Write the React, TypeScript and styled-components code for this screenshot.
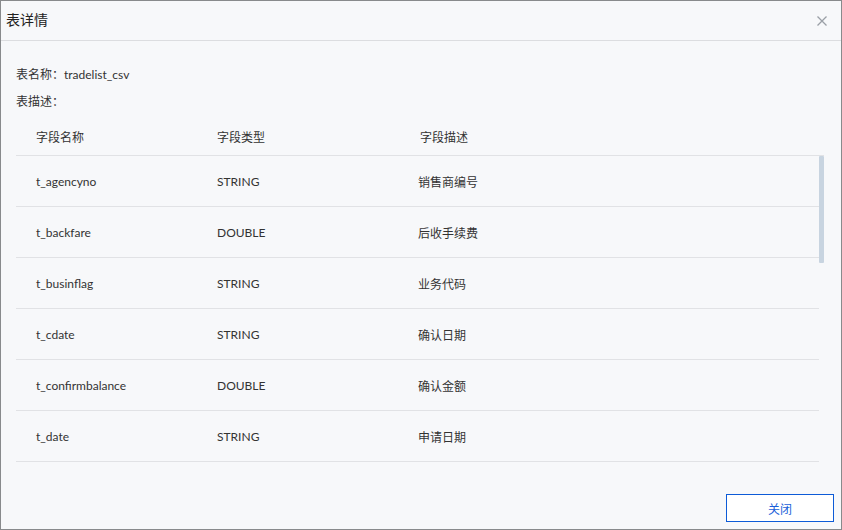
import { ReactElement } from 'react'
import styled, { createGlobalStyle } from 'styled-components'

const GlobalStyle = createGlobalStyle`
  html, body {
    margin: 0;
    padding: 0;
    background: #f7f8fa;
  }
  * {
    box-sizing: border-box;
  }
`

type Field = { name: string; type: string; desc: string }

const fields: Field[] = [
  { name: 't_agencyno', type: 'STRING', desc: '销售商编号' },
  { name: 't_backfare', type: 'DOUBLE', desc: '后收手续费' },
  { name: 't_businflag', type: 'STRING', desc: '业务代码' },
  { name: 't_cdate', type: 'STRING', desc: '确认日期' },
  { name: 't_confirmbalance', type: 'DOUBLE', desc: '确认金额' },
  { name: 't_date', type: 'STRING', desc: '申请日期' },
  { name: 't_fundacco', type: 'STRING', desc: '基金账号' },
  { name: 't_fundcode', type: 'STRING', desc: '基金代码' },
  { name: 't_interest', type: 'DOUBLE', desc: '利息' },
  { name: 't_netno', type: 'STRING', desc: '网点编号' },
  { name: 't_netvalue', type: 'DOUBLE', desc: '单位净值' },
  { name: 't_requestno', type: 'STRING', desc: '申请单编号' },
  { name: 't_sharetype', type: 'STRING', desc: '份额类别' },
  { name: 't_shares', type: 'DOUBLE', desc: '确认份额' },
  { name: 't_status', type: 'STRING', desc: '交易状态' },
  { name: 't_totalfare', type: 'DOUBLE', desc: '总费用' },
  { name: 't_tradeacco', type: 'STRING', desc: '交易账号' },
]

const font = `'Lato', 'Noto Sans CJK SC', sans-serif`

const Window = styled.div`
  width: 842px;
  height: 530px;
  border: 1px solid #888a8c;
  background: #f7f8fa;
  display: flex;
  flex-direction: column;
  font-family: ${font};
  font-size: 12px;
  color: #333;
`

const Header = styled.div`
  height: 40px;
  flex: none;
  display: flex;
  align-items: center;
  justify-content: space-between;
  padding: 0 12px 0 5px;
  border-bottom: 1px solid #dcdde0;
`

const Title = styled.span`
  font-size: 14px;
  color: #222;
  margin-top: -4px;
`

const CloseIcon = styled.button`
  border: none;
  background: none;
  padding: 0;
  width: 14px;
  height: 14px;
  display: flex;
  align-items: center;
  justify-content: center;
  cursor: pointer;
`

const Body = styled.div`
  flex: 1;
  padding: 24px 17px 0 15px;
  display: flex;
  flex-direction: column;
`

const InfoLine = styled.div`
  height: 27px;
  line-height: 20px;
  color: #333;
`

const Row = styled.div<{ $head?: boolean }>`
  display: grid;
  grid-template-columns: 181px 201px 1fr;
  height: ${p => (p.$head ? '37px' : '51px')};
  align-items: center;
  border-bottom: 1px solid #e1e2e5;
  padding-left: 20px;
  padding-bottom: ${p => (p.$head ? '2px' : '0')};
`

const Cell = styled.span<{ $shift?: number }>`
  padding-left: ${p => p.$shift ?? 0}px;
  white-space: nowrap;
`

const Scroller = styled.div`
  height: 306px;
  display: flex;
`

const Viewport = styled.div`
  flex: 1;
  overflow: hidden;
`

const Track = styled.div`
  width: 5px;
  flex: none;
`

const Thumb = styled.div`
  height: 107px;
  background: #c8d4e0;
  border-radius: 1px;
`

const Footer = styled.div`
  flex: none;
  display: flex;
  justify-content: flex-end;
  padding: 0 7px 7px 0;
`

const Button = styled.button`
  width: 108px;
  height: 28px;
  background: #fff;
  border: 1px solid #0d5bd7;
  color: #1a5fd9;
  font-family: ${font};
  font-size: 12px;
  cursor: pointer;
`

export default function App(): ReactElement {
  return (
    <>
      <GlobalStyle />
      <Window>
        <Header>
          <Title>表详情</Title>
          <CloseIcon aria-label="close">
            <svg width="10" height="10" viewBox="0 0 10 10">
              <path d="M0.5 0.5 L9.5 9.5 M9.5 0.5 L0.5 9.5" stroke="#9a9fa6" strokeWidth="1.3" />
            </svg>
          </CloseIcon>
        </Header>
        <Body>
          <InfoLine>表名称：tradelist_csv</InfoLine>
          <InfoLine>表描述：</InfoLine>
          <Row $head>
            <Cell>字段名称</Cell>
            <Cell>字段类型</Cell>
            <Cell $shift={2}>字段描述</Cell>
          </Row>
          <Scroller>
            <Viewport>
              {fields.map(f => (
                <Row key={f.name}>
                  <Cell>{f.name}</Cell>
                  <Cell>{f.type}</Cell>
                  <Cell>{f.desc}</Cell>
                </Row>
              ))}
            </Viewport>
            <Track>
              <Thumb />
            </Track>
          </Scroller>
        </Body>
        <Footer>
          <Button>关闭</Button>
        </Footer>
      </Window>
    </>
  )
}
